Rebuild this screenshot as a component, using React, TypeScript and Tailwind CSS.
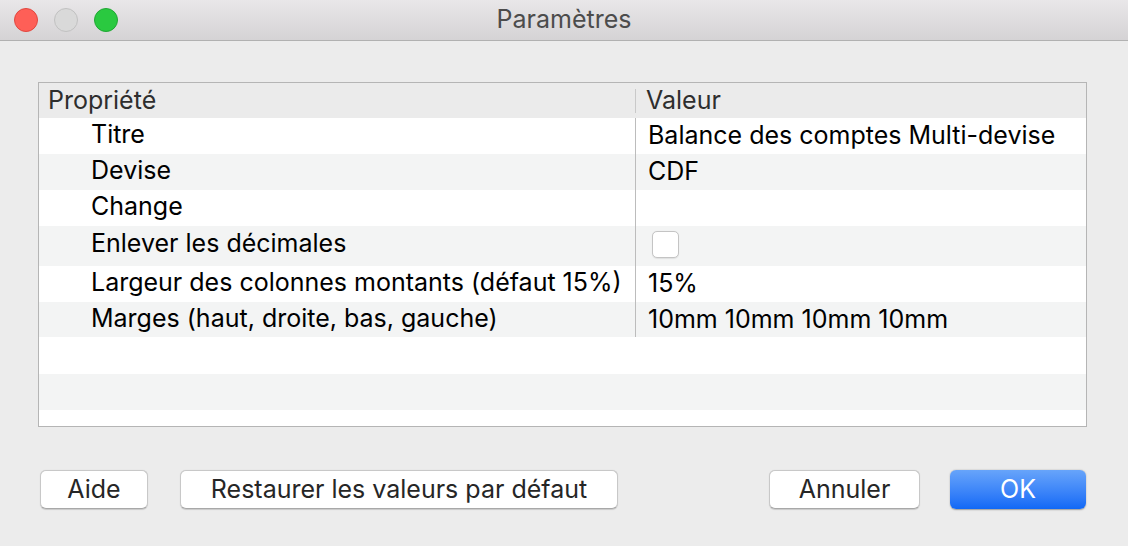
import React from "react";

const rows: { label: string; value?: string; checkbox?: boolean; h: string; align: string }[] = [
  { label: "Titre", value: "Balance des comptes Multi-devise", h: "h-[36px]", align: "items-center" },
  { label: "Devise", value: "CDF", h: "h-[36px]", align: "items-center" },
  { label: "Change", value: "", h: "h-[36px]", align: "items-center" },
  { label: "Enlever les décimales", checkbox: true, h: "h-[40px]", align: "items-start" },
  { label: "Largeur des colonnes montants (défaut 15%)", value: "15%", h: "h-[36px]", align: "items-center" },
  { label: "Marges (haut, droite, bas, gauche)", value: "10mm 10mm 10mm 10mm", h: "h-[35px]", align: "items-center" },
];

function Btn({ children, w, primary }: { children: React.ReactNode; w: string; primary?: boolean }) {
  return (
    <button
      className={
        primary
          ? `${w} h-[39px] rounded-[6px] bg-gradient-to-b from-[#67a4fa] to-[#1068f6] text-white text-[25px] leading-none shadow-[0_0.5px_1.5px_rgba(0,0,0,0.35)]`
          : `${w} h-[39px] rounded-[6px] bg-white text-[#262626] text-[25px] leading-none border border-[#c8c8c8] border-b-[#a8a8a8] shadow-[0_0.5px_1px_rgba(0,0,0,0.15)]`
      }
    >
      {children}
    </button>
  );
}

export default function App() {
  return (
    <div className="w-[1128px] h-[546px] bg-[#ececec] flex flex-col font-['Inter',sans-serif] overflow-hidden">
      <div className="h-[41px] shrink-0 bg-gradient-to-b from-[#e9e7e9] to-[#d5d3d5] border-b border-[#b1b1b1] grid grid-cols-[1fr_auto_1fr] items-center">
        <div className="flex items-center gap-[16px] pl-[14px]">
          <div className="w-[24px] h-[24px] rounded-full bg-[#fe5f57] border border-[#e1473f]" />
          <div className="w-[24px] h-[24px] rounded-full bg-[#d9d9d9] border border-[#c1c1c1]" />
          <div className="w-[24px] h-[24px] rounded-full bg-[#2ac940] border border-[#20a734]" />
        </div>
        <div className="text-[25px] text-[#4c4c4c] leading-none -mt-[1px]">Paramètres</div>
        <div />
      </div>

      <div className="pl-[38px] pr-[41px] pt-[41px]">
        <div className="h-[345px] border border-[#b5b5b5] bg-white flex flex-col overflow-hidden">
          <div className="h-[35px] shrink-0 bg-[#ebebeb] flex items-center text-[25px] leading-none text-[#2e2e2e]">
            <div className="w-[597px] pl-[9px] flex items-center justify-between h-full">
              <span>Propriété</span>
              <div className="w-px h-[24px] bg-[#c9c9c9]" />
            </div>
            <div className="pl-[10px]">Valeur</div>
          </div>
          {rows.map((r, i) => (
            <div
              key={r.label}
              className={`${r.h} shrink-0 flex text-[25px] leading-none text-black ${i % 2 === 0 ? "bg-white" : "bg-[#f3f4f4]"}`}
            >
              <div className={`w-[597px] pl-[52px] flex ${r.align} ${r.align === "items-start" ? "pt-[5px]" : "pb-[3px]"} border-r border-[#bcbcbc]`}>
                {r.label}
              </div>
              <div className={`pl-[12px] flex ${r.align} ${r.checkbox ? "pt-[5px] pl-[16px]" : "pb-[1px]"}`}>
                {r.checkbox ? (
                  <div className="w-[27px] h-[27px] rounded-[5px] bg-white border border-[#c4c4c4] shadow-[0_0.5px_1px_rgba(0,0,0,0.08)]" />
                ) : (
                  r.value
                )}
              </div>
            </div>
          ))}
          <div className="h-[37px] shrink-0 bg-white" />
          <div className="h-[36px] shrink-0 bg-[#f3f4f4]" />
          <div className="flex-1 bg-white" />
        </div>
      </div>

      <div className="flex items-center pl-[40px] pr-[42px] mt-[43px]">
        <Btn w="w-[108px]">Aide</Btn>
        <div className="w-[32px]" />
        <Btn w="w-[438px]">Restaurer les valeurs par défaut</Btn>
        <div className="flex-1" />
        <Btn w="w-[151px]">Annuler</Btn>
        <div className="w-[30px]" />
        <Btn w="w-[136px]" primary>OK</Btn>
      </div>
    </div>
  );
}
